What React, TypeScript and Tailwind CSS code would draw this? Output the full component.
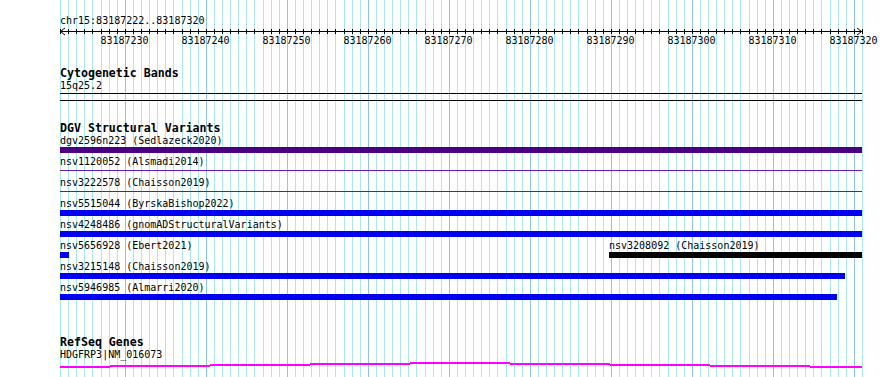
import React from 'react';

// browser window: chr15:83187222..83187320, one base = 802 / 99 px
const START = 83187222;
const BASES = 99;
const LEFT = 60;
const WIDTH = 802;
const BP = WIDTH / BASES;

const mono = "font-['DejaVu_Sans_Mono',monospace]";

type Variant = {
  label: string;
  second?: string;
  kind: 'bar' | 'line' | 'split';
  color?: string;
  width?: string;
};

const variants: Variant[] = [
  { label: 'dgv2596n223 (Sedlazeck2020)', kind: 'bar', color: 'bg-[#4b0082]', width: 'w-full' },
  { label: 'nsv1120052 (Alsmadi2014)', kind: 'line', color: 'bg-[#6a1cb0]' },
  { label: 'nsv3222578 (Chaisson2019)', kind: 'line', color: 'bg-[#d00000]' },
  { label: 'nsv5515044 (ByrskaBishop2022)', kind: 'bar', color: 'bg-[#0000f0]', width: 'w-full' },
  { label: 'nsv4248486 (gnomADStructuralVariants)', kind: 'bar', color: 'bg-[#0000f0]', width: 'w-full' },
  { label: 'nsv5656928 (Ebert2021)', second: 'nsv3208092 (Chaisson2019)', kind: 'split' },
  { label: 'nsv3215148 (Chaisson2019)', kind: 'bar', color: 'bg-[#0000f0]', width: 'w-[785px]' },
  { label: 'nsv5946985 (Almarri2020)', kind: 'bar', color: 'bg-[#0000f0]', width: 'w-[777px]' },
];

function GridLines() {
  const lines = [];
  for (let i = 0; i <= BASES; i++) {
    const x = Math.round(LEFT + i * BP) + 0.5;
    const major = (START + i) % 10 === 0;
    lines.push(
      <line key={i} x1={x} x2={x} y1={0} y2={377} stroke={major ? '#8cc4ea' : '#a8e8ee'} strokeWidth={1} />
    );
  }
  return (
    <svg className="absolute inset-0" width={890} height={377} shapeRendering="crispEdges">
      {lines}
    </svg>
  );
}

function Ruler() {
  const ticks = [];
  for (let i = 0; i <= BASES; i++) {
    const x = Math.round(i * BP) + 0.5;
    ticks.push(<line key={i} x1={x} x2={x} y1={2} y2={7} stroke="#000" />);
  }
  return (
    <svg width={WIDTH + 2} height={8} className="block overflow-visible" shapeRendering="crispEdges">
      <line x1={0} x2={WIDTH} y1={4.5} y2={4.5} stroke="#000" />
      {ticks}
      <polyline points="5,1 0.5,4.5 5,8" fill="none" stroke="#000" shapeRendering="auto" />
      <polyline points={`${WIDTH - 5},1 ${WIDTH - 0.5},4.5 ${WIDTH - 5},8`} fill="none" stroke="#000" shapeRendering="auto" />
    </svg>
  );
}

function GeneLine() {
  // small steps along the transcript
  const ys = [5, 4, 3, 2, 1, 2, 3, 4, 5];
  const xs = [0, 50, 150, 250, 350, 450, 550, 650, 750, WIDTH];
  return (
    <svg width={WIDTH} height={7} className="block" shapeRendering="crispEdges">
      {ys.map((y, i) => (
        <rect key={i} x={xs[i]} y={y} width={xs[i + 1] - xs[i]} height={1.5} fill="#ff00ff" />
      ))}
    </svg>
  );
}

function VariantRow({ v }: { v: Variant }) {
  return (
    <div className="h-[21px] flex flex-col">
      {v.kind === 'split' ? (
        <div className="h-[13px] leading-[13px] flex whitespace-pre">
          <span className="w-[549px]">{v.label}</span>
          <span>{v.second}</span>
        </div>
      ) : (
        <div className="h-[13px] leading-[13px] whitespace-pre">{v.label}</div>
      )}
      {v.kind === 'bar' && <div className={`h-[6px] ${v.width} ${v.color}`} />}
      {v.kind === 'line' && <div className={`mt-[2px] h-px w-full ${v.color}`} />}
      {v.kind === 'split' && (
        <div className="h-[6px] flex">
          <div className="w-[9px] bg-[#0000f0]" />
          <div className="ml-[540px] flex-1 bg-black" />
        </div>
      )}
    </div>
  );
}

export default function App() {
  const labels = [];
  for (let p = 83187230; p <= 83187320; p += 10) labels.push(p);

  return (
    <div className={`relative w-[890px] h-[377px] bg-white overflow-hidden text-black text-[10px] ${mono}`}>
      <GridLines />
      <div className="relative pl-[60px] w-[862px]">
        <div className="mt-[15px] h-[12px] leading-[12px]">chr15:83187222..83187320</div>
        <Ruler />
        <div className="h-[12px] leading-[12px] flex pl-[24px]">
          {labels.map((p) => (
            <div key={p} className="w-[81px] shrink-0 text-center">
              {p}
            </div>
          ))}
        </div>

        <div className="mt-[20px] h-[13px] leading-[13px] font-bold text-[11.6px]">Cytogenetic Bands</div>
        <div className="h-[12px] leading-[12px]">15q25.2</div>
        <div className="mt-[1px] h-px bg-black" />
        <div className="mt-[6px] h-px bg-black" />

        <div className="mt-[21px] h-[12px] leading-[12px] font-bold text-[11.6px]">DGV Structural Variants</div>
        {variants.map((v) => (
          <VariantRow key={v.label} v={v} />
        ))}

        <div className="mt-[34px] h-[12px] leading-[12px] font-bold text-[11.6px]">RefSeq Genes</div>
        <div className="h-[13px] leading-[13px]">HDGFRP3|NM_016073</div>
        <GeneLine />
      </div>
    </div>
  );
}
